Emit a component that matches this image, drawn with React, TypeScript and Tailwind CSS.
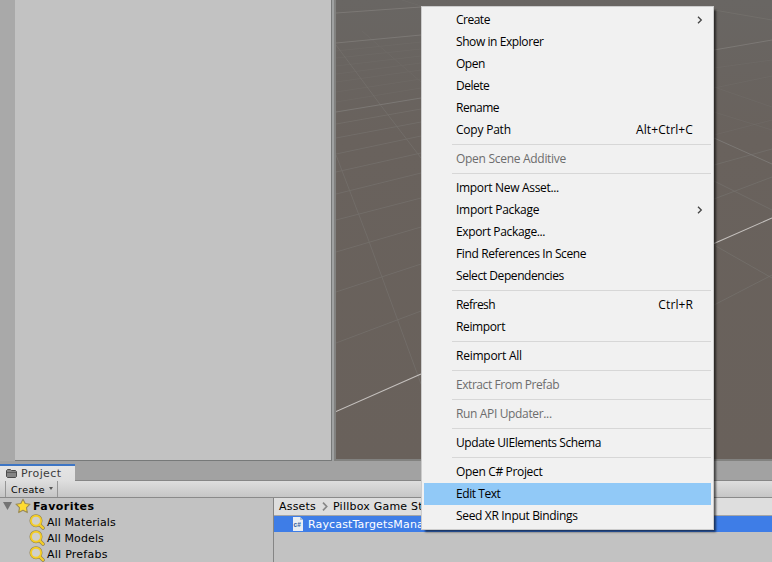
import React from "react";

type Item = { label: string; tracking: string; shortcut?: string; arrow?: boolean; disabled?: boolean; active?: boolean };

const groups: Item[][] = [
  [
    { label: "Create", tracking: "tracking-[-0.5px]", arrow: true },
    { label: "Show in Explorer", tracking: "tracking-[-0.42px]" },
    { label: "Open", tracking: "tracking-[-0.5px]" },
    { label: "Delete", tracking: "tracking-[-0.5px]" },
    { label: "Rename", tracking: "tracking-[-0.5px]" },
    { label: "Copy Path", tracking: "tracking-[-0.22px]", shortcut: "Alt+Ctrl+C" },
  ],
  [{ label: "Open Scene Additive", tracking: "tracking-[-0.29px]", disabled: true }],
  [
    { label: "Import New Asset...", tracking: "tracking-[-0.32px]" },
    { label: "Import Package", tracking: "tracking-[-0.29px]", arrow: true },
    { label: "Export Package...", tracking: "tracking-[-0.35px]" },
    { label: "Find References In Scene", tracking: "tracking-[-0.38px]" },
    { label: "Select Dependencies", tracking: "tracking-[-0.42px]" },
  ],
  [
    { label: "Refresh", tracking: "tracking-[-0.55px]", shortcut: "Ctrl+R" },
    { label: "Reimport", tracking: "tracking-[-0.37px]" },
  ],
  [{ label: "Reimport All", tracking: "tracking-[-0.25px]" }],
  [{ label: "Extract From Prefab", tracking: "tracking-[-0.44px]", disabled: true }],
  [{ label: "Run API Updater...", tracking: "tracking-[-0.35px]", disabled: true }],
  [{ label: "Update UIElements Schema", tracking: "tracking-[-0.43px]" }],
  [
    { label: "Open C# Project", tracking: "tracking-[-0.34px]" },
    { label: "Edit Text", tracking: "tracking-[-0.44px]", active: true },
    { label: "Seed XR Input Bindings", tracking: "tracking-[-0.33px]" },
  ],
];

function ContextMenu() {
  return (
    <div className="absolute left-[421px] top-[6px] h-[524px] w-[293px] border border-[#cccccc] bg-[#f1f1f1] p-[2px] font-['Open_Sans','Noto_Sans',sans-serif] text-[12px] text-black shadow-[3px_3px_2px_-1px_rgba(0,0,0,0.6)]">
      {groups.map((group, i) => (
        <div key={i}>
          {i > 0 && (
            <div className="flex h-[7px] items-center pl-[28px]">
              <div className="h-px w-full bg-[#d7d7d7]" />
            </div>
          )}
          {group.map((item) => (
            <div
              key={item.label}
              className={`flex h-[22px] items-center pl-[32px] pr-[18px] leading-[22px] whitespace-nowrap ${item.active ? "bg-[#91c9f7]" : ""} ${item.disabled ? "text-[#6d6d6d]" : ""}`}
            >
              <span className={`grow ${item.tracking}`}>{item.label}</span>
              {item.shortcut && <span className="tracking-[0.1px]">{item.shortcut}</span>}
              {item.arrow && (
                <svg className="-mr-[10px]" width="6" height="8" viewBox="0 0 6 8" fill="none" stroke="#444" strokeWidth="1.3">
                  <path d="M1 0.7L4.3 4L1 7.3" />
                </svg>
              )}
            </div>
          ))}
        </div>
      ))}
    </div>
  );
}

function SceneGrid() {
  return (
    <svg className="block h-full w-full" viewBox="336 0 436 459" preserveAspectRatio="none" fill="none">
      <g stroke="#77736f" strokeWidth="1" opacity="0.3">
        <path d="M336 51L421 42M336 58L421 49M336 66L421 56M336 74L421 63M336 82L421 70M336 92L421 79M336 102L421 88" />
        <path d="M362 31L421 82M402 0L421 6M714 112L772 130M714 88L772 76M714 68L772 60M714 87L772 107M714 135L772 120" />
      </g>
      <g stroke="#77736f" strokeWidth="1" opacity="0.65">
        <path d="M336 124L421 109M336 138L421 122M336 154L421 136M336 172L421 153M336 194L421 173M336 220L421 198M336 252L421 227M336 292L421 264M336 343L421 311" />
        <path d="M336 45L382 107L421 158M336 155L367 236L421 384" />
        <path d="M714 181L772 210M714 245L772 278M714 305L772 275M714 199L772 177M714 165L772 149M714 10L772 20" />
      </g>
      <g stroke="#7d7a77" strokeWidth="1" opacity="0.9">
        <path d="M336 13L421 7M336 43L421 35M336 112L421 98M714 50L772 40M714 138L772 164" />
      </g>
      <path d="M336 411.5L421 374M714 243.5L772 218" stroke="#c5c1be" strokeWidth="1.1" />
    </svg>
  );
}

function SearchIcon() {
  return (
    <svg width="16" height="16" viewBox="0 0 16 16" fill="none">
      <path d="M10 10L14 14" stroke="#8f8051" strokeWidth="3.6" strokeLinecap="round" />
      <circle cx="7" cy="6.7" r="5" stroke="#8f8051" strokeWidth="3" />
      <circle cx="7" cy="6.7" r="5" fill="#d0d0cc" stroke="#f4cd27" strokeWidth="2" />
      <path d="M10.5 10.5L14 14" stroke="#f4cd27" strokeWidth="2.4" strokeLinecap="round" />
    </svg>
  );
}

const favorites = [
  { label: "All Materials", tracking: "tracking-[0.1px]" },
  { label: "All Models", tracking: "tracking-[0.1px]" },
  { label: "All Prefabs", tracking: "tracking-[0.25px]" },
];

export default function App() {
  return (
    <div className="relative flex h-[562px] w-[772px] flex-col overflow-hidden bg-[#c2c2c2] font-['DejaVu_Sans',Verdana,sans-serif] text-[11px] text-black">
      <div className="flex h-[461px] shrink-0 bg-[#a0a2a2]">
        <div className="w-[15px] bg-[#a9a9a9]" />
        <div className="w-[317px] border-r border-b border-[#777979] bg-[#c2c2c2]" />
        <div className="w-[2px]" />
        <div className="w-[438px] border-b-2 border-l-2 border-[#828280] bg-linear-to-b from-[#696663] via-[#69625d] via-30% to-[#69615b]">
          <SceneGrid />
        </div>
      </div>

      <div className="flex h-[20px] shrink-0 items-end border-b border-[#868686] bg-[#a2a2a2]">
        <div className="-mb-px flex h-[17px] w-[75px] items-center border-t-2 border-[#3d75c4] bg-linear-to-b from-[#e5e5e5] to-[#dedede] pl-[6px] text-[#3c3c3c]">
          <svg width="11" height="9" viewBox="0 0 11 9">
            <path d="M0.5 7.5V1.5L1.5 0.5H4.5L5.5 1.5H9.5L10.5 2.5V7.5L9.5 8.5H1.5Z" fill="#858585" stroke="#4b4b4b" />
            <path d="M1 3.5H10" stroke="#5c5c5c" />
          </svg>
          <span className="ml-[4px] pt-[2px] tracking-[0.4px]">Project</span>
        </div>
      </div>
      <div className="flex h-[17px] shrink-0 border-b border-[#8a8a8a] bg-linear-to-b from-[#dedede] to-[#c6c6c6] pl-[5px]">
        <div className="flex w-[53px] items-center border-x border-[#969696] pl-[5px] text-[9.5px] leading-[16px]">
          <span className="pt-px tracking-[0.4px]">Create</span>
          <span className="mb-[2px] ml-[4px] border-x-[2.5px] border-t-[3px] border-x-transparent border-t-[#555]" />
        </div>
      </div>

      <div className="flex min-h-0 grow">
        <div className="w-[273px]">
          <div className="flex h-[16px] items-center pl-[3px] font-bold">
            <svg width="9" height="8" viewBox="0 0 9 8">
              <path d="M0 0H9L4.5 8Z" fill="#737373" />
            </svg>
            <svg className="ml-[3px]" width="16" height="16" viewBox="0 0 16 16">
              <path d="M8 1.2L10.2 5.5L15 6.2L11.5 9.7L12.3 14.6L8 12.3L3.7 14.6L4.5 9.7L1 6.2L5.8 5.5Z" fill="#ffdc30" stroke="#9b8b55" strokeWidth="1.1" strokeLinejoin="round" />
            </svg>
            <span className="ml-[2px] pt-[2px] tracking-[0.45px]">Favorites</span>
          </div>
          {favorites.map(({ label, tracking }) => (
            <div key={label} className="flex h-[16px] items-center pl-[29px]">
              <SearchIcon />
              <span className={`ml-[2px] pt-[2px] ${tracking}`}>{label}</span>
            </div>
          ))}
        </div>
        <div className="w-[499px] border-l border-[#858585]">
          <div className="flex h-[18px] items-center border-b border-[#a5a5a5] bg-[#dedede] pl-[5px] whitespace-nowrap">
            <span className="pt-[2px] tracking-[0.2px]">Assets</span>
            <svg className="mx-[5.5px]" width="6" height="9" viewBox="0 0 6 9" fill="none" stroke="#888" strokeWidth="1.7">
              <path d="M1 0.7L4.7 4.5L1 8.3" />
            </svg>
            <span className="pt-[2px] tracking-[0.22px]">Pillbox Game Stuff</span>
          </div>
          <div className="flex h-[16px] items-center bg-[#3e7de7] pl-[19px] text-white">
            <svg width="10" height="14" viewBox="0 0 10 14">
              <path d="M0 0H7L10 3V14H0Z" fill="#e9eef3" />
              <path d="M7 0V3H10" fill="#aebdce" />
              <text x="0.6" y="10" fontSize="6.5" fontWeight="bold" fill="#32619e" fontFamily="Liberation Sans, sans-serif">c#</text>
            </svg>
            <span className="ml-[5px] pt-[2px] tracking-[0.15px]">RaycastTargetsManager</span>
          </div>
        </div>
      </div>
      <ContextMenu />
    </div>
  );
}
